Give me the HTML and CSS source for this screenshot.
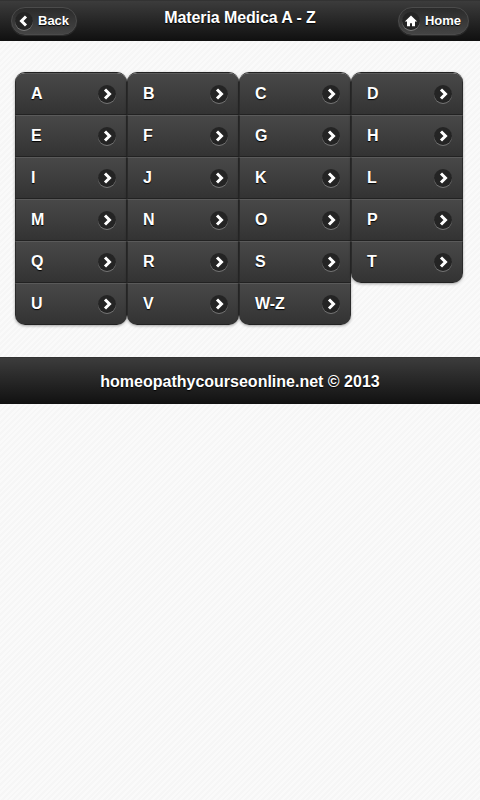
FILE: index.html
```html
<!DOCTYPE html>
<html lang="en">
<head>
    <meta charset="UTF-8">
    <meta name="viewport" content="width=device-width, initial-scale=1.0">
    <title>Materia Medica A - Z</title>
    <link rel="stylesheet" href="styles.css">
</head>
<body>
    <div class="top-bar">
        <a class="bar-button">
            <span class="round-icon">
                <svg viewBox="0 0 18 18" width="18" height="18"><path d="M11 4.5 6.5 9l4.5 4.5" fill="none" stroke="#fff" stroke-width="3"/></svg>
            </span>
            Back
        </a>
        <h1>Materia Medica A - Z</h1>
        <a class="bar-button home">
            <span class="round-icon">
                <svg viewBox="0 0 18 18" width="18" height="18"><path d="M9 3.5 2.8 9.5h2.2v4.8h3v-3h2v3h3V9.5h2.2z" fill="#fff"/></svg>
            </span>
            Home
        </a>
    </div>

    <div class="letters">
        <ul class="letter-list">
            <li>A<span class="round-icon small"><svg viewBox="0 0 18 18" width="18" height="18"><path d="M7 4.5 11.5 9 7 13.5" fill="none" stroke="#fff" stroke-width="3"/></svg></span></li>
            <li>E<span class="round-icon small"><svg viewBox="0 0 18 18" width="18" height="18"><path d="M7 4.5 11.5 9 7 13.5" fill="none" stroke="#fff" stroke-width="3"/></svg></span></li>
            <li>I<span class="round-icon small"><svg viewBox="0 0 18 18" width="18" height="18"><path d="M7 4.5 11.5 9 7 13.5" fill="none" stroke="#fff" stroke-width="3"/></svg></span></li>
            <li>M<span class="round-icon small"><svg viewBox="0 0 18 18" width="18" height="18"><path d="M7 4.5 11.5 9 7 13.5" fill="none" stroke="#fff" stroke-width="3"/></svg></span></li>
            <li>Q<span class="round-icon small"><svg viewBox="0 0 18 18" width="18" height="18"><path d="M7 4.5 11.5 9 7 13.5" fill="none" stroke="#fff" stroke-width="3"/></svg></span></li>
            <li>U<span class="round-icon small"><svg viewBox="0 0 18 18" width="18" height="18"><path d="M7 4.5 11.5 9 7 13.5" fill="none" stroke="#fff" stroke-width="3"/></svg></span></li>
        </ul>
        <ul class="letter-list">
            <li>B<span class="round-icon small"><svg viewBox="0 0 18 18" width="18" height="18"><path d="M7 4.5 11.5 9 7 13.5" fill="none" stroke="#fff" stroke-width="3"/></svg></span></li>
            <li>F<span class="round-icon small"><svg viewBox="0 0 18 18" width="18" height="18"><path d="M7 4.5 11.5 9 7 13.5" fill="none" stroke="#fff" stroke-width="3"/></svg></span></li>
            <li>J<span class="round-icon small"><svg viewBox="0 0 18 18" width="18" height="18"><path d="M7 4.5 11.5 9 7 13.5" fill="none" stroke="#fff" stroke-width="3"/></svg></span></li>
            <li>N<span class="round-icon small"><svg viewBox="0 0 18 18" width="18" height="18"><path d="M7 4.5 11.5 9 7 13.5" fill="none" stroke="#fff" stroke-width="3"/></svg></span></li>
            <li>R<span class="round-icon small"><svg viewBox="0 0 18 18" width="18" height="18"><path d="M7 4.5 11.5 9 7 13.5" fill="none" stroke="#fff" stroke-width="3"/></svg></span></li>
            <li>V<span class="round-icon small"><svg viewBox="0 0 18 18" width="18" height="18"><path d="M7 4.5 11.5 9 7 13.5" fill="none" stroke="#fff" stroke-width="3"/></svg></span></li>
        </ul>
        <ul class="letter-list">
            <li>C<span class="round-icon small"><svg viewBox="0 0 18 18" width="18" height="18"><path d="M7 4.5 11.5 9 7 13.5" fill="none" stroke="#fff" stroke-width="3"/></svg></span></li>
            <li>G<span class="round-icon small"><svg viewBox="0 0 18 18" width="18" height="18"><path d="M7 4.5 11.5 9 7 13.5" fill="none" stroke="#fff" stroke-width="3"/></svg></span></li>
            <li>K<span class="round-icon small"><svg viewBox="0 0 18 18" width="18" height="18"><path d="M7 4.5 11.5 9 7 13.5" fill="none" stroke="#fff" stroke-width="3"/></svg></span></li>
            <li>O<span class="round-icon small"><svg viewBox="0 0 18 18" width="18" height="18"><path d="M7 4.5 11.5 9 7 13.5" fill="none" stroke="#fff" stroke-width="3"/></svg></span></li>
            <li>S<span class="round-icon small"><svg viewBox="0 0 18 18" width="18" height="18"><path d="M7 4.5 11.5 9 7 13.5" fill="none" stroke="#fff" stroke-width="3"/></svg></span></li>
            <li>W-Z<span class="round-icon small"><svg viewBox="0 0 18 18" width="18" height="18"><path d="M7 4.5 11.5 9 7 13.5" fill="none" stroke="#fff" stroke-width="3"/></svg></span></li>
        </ul>
        <ul class="letter-list">
            <li>D<span class="round-icon small"><svg viewBox="0 0 18 18" width="18" height="18"><path d="M7 4.5 11.5 9 7 13.5" fill="none" stroke="#fff" stroke-width="3"/></svg></span></li>
            <li>H<span class="round-icon small"><svg viewBox="0 0 18 18" width="18" height="18"><path d="M7 4.5 11.5 9 7 13.5" fill="none" stroke="#fff" stroke-width="3"/></svg></span></li>
            <li>L<span class="round-icon small"><svg viewBox="0 0 18 18" width="18" height="18"><path d="M7 4.5 11.5 9 7 13.5" fill="none" stroke="#fff" stroke-width="3"/></svg></span></li>
            <li>P<span class="round-icon small"><svg viewBox="0 0 18 18" width="18" height="18"><path d="M7 4.5 11.5 9 7 13.5" fill="none" stroke="#fff" stroke-width="3"/></svg></span></li>
            <li>T<span class="round-icon small"><svg viewBox="0 0 18 18" width="18" height="18"><path d="M7 4.5 11.5 9 7 13.5" fill="none" stroke="#fff" stroke-width="3"/></svg></span></li>
        </ul>
    </div>

    <div class="footer-bar">homeopathycourseonline.net &copy; 2013</div>
</body>
</html>
```

FILE: styles.css
```css
html {
    height: 100%;
}

body {
    margin: 0;
    min-height: 100%;
    font-family: "Liberation Sans", Arial, sans-serif;
    font-weight: bold;
    color: #fff;
    background-color: #f9f9f9;
    background-image: repeating-linear-gradient(
        135deg,
        #fafafa 0px,
        #fafafa 2px,
        #f6f6f6 2px,
        #f6f6f6 4px
    );
}

.top-bar {
    height: 39px;
    display: grid;
    grid-template-columns: 1fr auto 1fr;
    align-items: center;
    padding: 0 11px;
    border-top: 1px solid #333;
    border-bottom: 1px solid #111;
    background: linear-gradient(#3c3c3c, #111);
    text-shadow: 0 1px 1px #000;
}

.top-bar h1 {
    margin: 0 0 5px;
    font-size: 16px;
    line-height: 18px;
    letter-spacing: -0.1px;
}

.bar-button {
    display: flex;
    align-items: center;
    gap: 5px;
    height: 26px;
    padding: 0 7px 0 3px;
    font-size: 13px;
    border: 1px solid #4b4b4b;
    border-radius: 15px;
    background: linear-gradient(#2b2b2b, #444);
    box-shadow: 0 1px 1px rgba(255, 255, 255, 0.1);
    justify-self: start;
}

.bar-button.home {
    justify-self: end;
}

.round-icon {
    width: 18px;
    height: 18px;
    border-radius: 50%;
    background: #242424;
    box-shadow: 0 1px 0 rgba(255, 255, 255, 0.3);
    flex-shrink: 0;
}

.round-icon svg {
    display: block;
}

.letters {
    display: flex;
    align-items: flex-start;
    padding: 31px 17px 32px 15px;
}

.letter-list {
    list-style: none;
    margin: 0;
    padding: 0;
    width: 112px;
    border-top: 1px solid #222;
    border-radius: 10px;
    overflow: hidden;
    box-shadow: 0 1px 3px rgba(0, 0, 0, 0.35);
}

.letter-list li {
    height: 42px;
    box-sizing: border-box;
    display: flex;
    align-items: center;
    justify-content: space-between;
    padding: 0 10px 0 15px;
    font-size: 16px;
    border: 1px solid #2a2a2a;
    border-top-color: #5a5a5a;
    border-bottom-color: #222;
    background: linear-gradient(#484848, #333);
    text-shadow: 0 1px 1px #000;
}

.footer-bar {
    height: 47px;
    display: flex;
    align-items: center;
    justify-content: center;
    padding-top: 1px;
    font-size: 16px;
    background: linear-gradient(#3c3c3c, #111);
    border-top: 1px solid #333;
    box-sizing: border-box;
    text-shadow: 0 1px 1px #000;
}
```
